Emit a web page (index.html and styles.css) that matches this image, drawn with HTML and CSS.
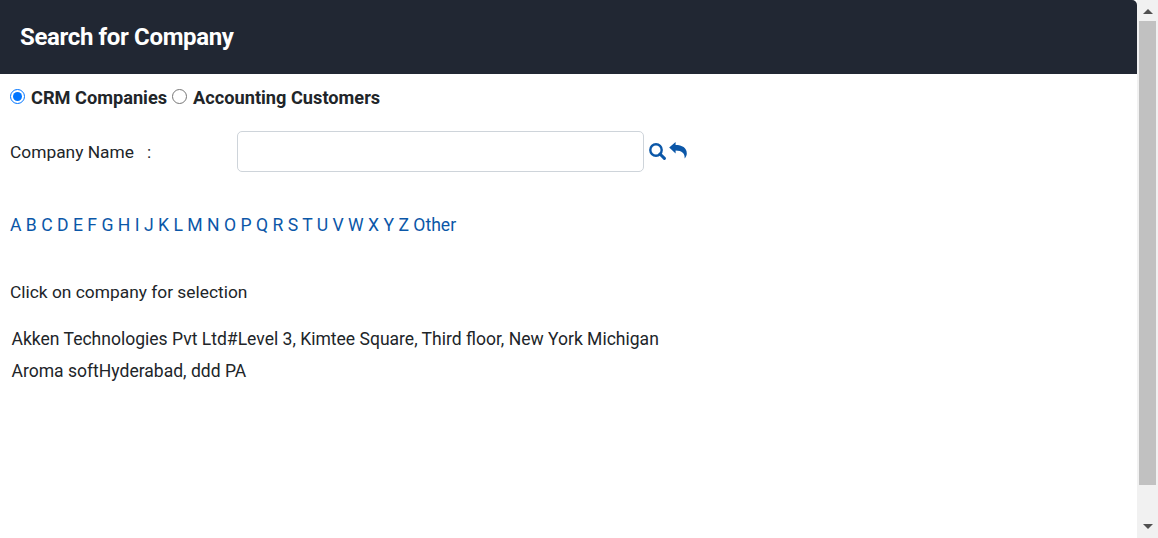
FILE: index.html
```html
<!DOCTYPE html>
<html>

<head>
    <title>Search for Company</title>
    <link rel="stylesheet" href="styles.css">
</head>

<body>
    <div class="window">
        <section class="main">
            <header class="title-bar">
                <h1>Search for Company</h1>
            </header>
            <div class="content">
                <div class="radio-row">
                    <input type="radio" name="source" id="crm" checked>
                    <label for="crm">CRM Companies</label>
                    <input type="radio" name="source" id="accounting">
                    <label for="accounting">Accounting Customers</label>
                </div>
                <div class="search-row">
                    <label class="search-label" for="company">Company Name<span class="colon">:</span></label>
                    <input class="search-input" id="company" type="text">
                    <a class="icon-link icon-search" href="#" aria-label="Search">
                        <svg width="17" height="17" viewBox="0 0 17 17">
                            <circle cx="7" cy="7" r="5.7" fill="none" stroke="#0b57a8" stroke-width="2.4" />
                            <path d="M11 11 L15.4 15.4" stroke="#0b57a8" stroke-width="3" stroke-linecap="round" />
                        </svg>
                    </a>
                    <a class="icon-link" href="#" aria-label="Back">
                        <svg width="18" height="17" viewBox="0 0 18 17">
                            <path fill="#0b57a8" d="M0.2 5.6 L6.6 0 V3 C13 3 17.8 5.6 17.8 11.4 C17.8 13.4 16.8 15.2 15.6 16.4 C16.2 11.6 13 8.4 6.6 8.4 V11.6 Z" />
                        </svg>
                    </a>
                </div>
                <nav class="letters">
                    <a href="#">A</a> <a href="#">B</a> <a href="#">C</a> <a href="#">D</a> <a href="#">E</a>
                    <a href="#">F</a> <a href="#">G</a> <a href="#">H</a> <a href="#">I</a> <a href="#">J</a>
                    <a href="#">K</a> <a href="#">L</a> <a href="#">M</a> <a href="#">N</a> <a href="#">O</a>
                    <a href="#">P</a> <a href="#">Q</a> <a href="#">R</a> <a href="#">S</a> <a href="#">T</a>
                    <a href="#">U</a> <a href="#">V</a> <a href="#">W</a> <a href="#">X</a> <a href="#">Y</a>
                    <a href="#">Z</a> <a href="#">Other</a>
                </nav>
                <p class="hint">Click on company for selection</p>
                <ul class="results">
                    <li>Akken Technologies Pvt Ltd#Level 3, Kimtee Square, Third floor, New York Michigan</li>
                    <li>Aroma softHyderabad, ddd PA</li>
                </ul>
            </div>
        </section>
        <div class="scrollbar">
            <span class="arrow-up"></span>
            <div class="thumb"></div>
            <span class="arrow-down"></span>
        </div>
    </div>
</body>

</html>
```

FILE: styles.css
```css
* {
    box-sizing: border-box;
}

html,
body {
    height: 100%;
    margin: 0;
}

body {
    overflow: hidden;
    background-color: #FFF;
    color: #212529;
    font-family: Roboto, "Liberation Sans", sans-serif;
    font-size: 17.36px;
}

.window {
    display: flex;
    height: 538px;
}

.main {
    flex: 1;
    min-width: 0;
}

.title-bar {
    height: 74px;
    display: flex;
    align-items: center;
    padding-left: 20px;
    background-color: #212733;
    border-top-right-radius: 5px;
}

.title-bar h1 {
    margin: -1px 0 0;
    color: #FFF;
    font-size: 24px;
    font-weight: 700;
    letter-spacing: -0.35px;
}

.content {
    padding: 12px 10px 0;
}

.radio-row {
    display: flex;
    align-items: center;
    height: 22px;
    font-size: 18.2px;
    font-weight: 700;
}

.radio-row input {
    width: 15px;
    height: 15px;
    margin: 0 6px 2px 0;
    accent-color: #0075ff;
}

.radio-row label {
    margin-right: 5px;
}

.search-row {
    display: flex;
    align-items: center;
    margin-top: 23px;
    height: 41px;
}

.search-label {
    width: 227px;
}

.colon {
    margin-left: 13px;
}

.search-input {
    width: 407px;
    height: 41px;
    margin-right: 5px;
    border: 1px solid #ced4da;
    border-radius: 5px;
}

.icon-link {
    display: flex;
    margin-bottom: 2px;
}

.icon-search {
    margin-right: 3px;
    margin-bottom: 0;
}

.letters {
    margin-top: 41px;
    line-height: 24px;
    font-size: 17.6px;
}

.letters a {
    color: #0b57a8;
    text-decoration: none;
}

.hint {
    margin: 43px 0 0;
    line-height: 24px;
}

.results {
    margin: 19px 0 0;
    padding: 0 0 0 1.5px;
    list-style: none;
    font-size: 17.55px;
}

.results li {
    line-height: 32px;
}

.scrollbar {
    width: 21px;
    display: flex;
    flex-direction: column;
    align-items: center;
    padding: 0 2px;
    background-color: #f1f1f1;
}

.thumb {
    width: 100%;
    height: 464px;
    margin-top: 7px;
    background-color: #c1c1c1;
}

.arrow-up,
.arrow-down {
    width: 0;
    height: 0;
    border-left: 5px solid transparent;
    border-right: 5px solid transparent;
}

.arrow-up {
    margin-top: 9px;
    border-bottom: 5px solid #505050;
}

.arrow-down {
    margin-top: 39px;
    border-top: 5px solid #505050;
}
```
